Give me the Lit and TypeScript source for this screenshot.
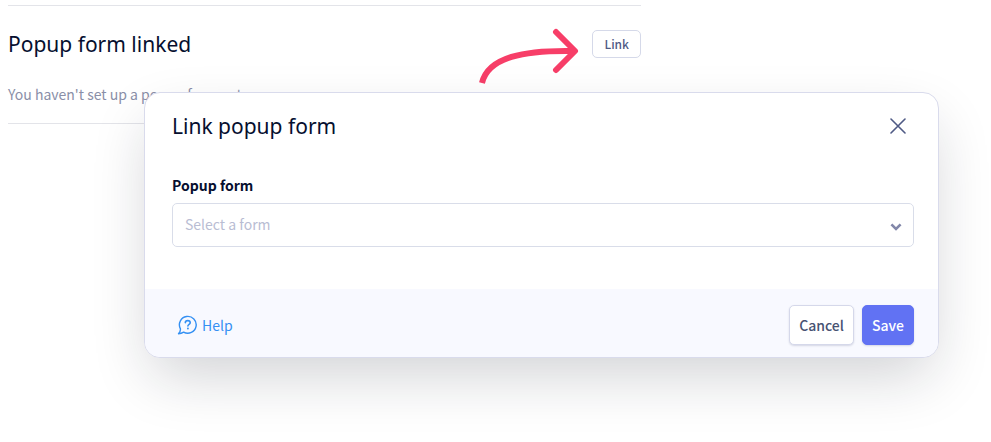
import { LitElement, html, css } from "lit";
import { customElement } from "lit/decorators.js";

@customElement("link-form-dialog")
class LinkFormDialog extends LitElement {
  static styles = css`
    :host {
      display: block;
      box-sizing: border-box;
      border: 1px solid #d9dbec;
      border-radius: 16px;
      background: #fff;
      overflow: hidden;
      box-shadow: 0 24px 60px -8px rgba(20, 24, 40, 0.2);
    }
    .head {
      display: flex;
      align-items: center;
      justify-content: space-between;
      padding: 17px 24px 0 27px;
    }
    .title {
      margin: 0;
      font: 400 21px/32px "Noto Sans", sans-serif;
      color: #060f2f;
    }
    .close {
      display: flex;
      padding: 8px;
      border: 0;
      background: none;
      color: #4f5a85;
    }
    .field {
      padding: 33px 24px 42px 27px;
    }
    .label {
      display: block;
      line-height: 20px;
      font-weight: 700;
      color: #060f2f;
      margin-bottom: 8px;
    }
    .control {
      position: relative;
    }
    .select {
      appearance: none;
      display: block;
      box-sizing: border-box;
      width: 100%;
      height: 44px;
      padding: 0 40px 2px 12px;
      border: 1px solid #d9dde9;
      border-radius: 5px;
      background: #fff;
      font: inherit;
      color: #b9bdd3;
    }
    .chevron {
      position: absolute;
      right: 12px;
      top: 20px;
      color: #8388aa;
      pointer-events: none;
    }
    .foot {
      display: flex;
      align-items: center;
      gap: 8px;
      padding: 16px 24px 12px 32px;
      background: #f8f9ff;
    }
    .help {
      display: flex;
      align-items: center;
      gap: 4px;
      margin-right: auto;
      color: #3490f3;
      text-decoration: none;
    }
    .btn {
      height: 40px;
      padding: 0 9px 1px;
      border: 1px solid #d5d8ea;
      border-radius: 5px;
      background: #fff;
      font: inherit;
      font-weight: 500;
      color: #475272;
      box-shadow: 0 1px 2px rgba(30, 40, 90, 0.16);
    }
    .primary {
      border-color: #6172f3;
      background: #6172f3;
      color: #fff;
    }
  `;

  render() {
    return html`
      <header class="head">
        <h2 class="title">Link popup form</h2>
        <button class="close" type="button" aria-label="Close">
          <svg width="16" height="16" viewBox="0 0 16 16" fill="none" stroke="currentColor" stroke-width="1.6" stroke-linecap="round">
            <path d="M1 1L15 15M15 1L1 15" />
          </svg>
        </button>
      </header>
      <div class="field">
        <label class="label" for="form">Popup form</label>
        <div class="control">
          <select class="select" id="form">
            <option>Select a form</option>
          </select>
          <svg class="chevron" width="12" height="9" viewBox="0 0 12 9" fill="none" stroke="currentColor" stroke-width="2.6">
            <path d="M1.4 1.4L6 6L10.6 1.4" />
          </svg>
        </div>
      </div>
      <footer class="foot">
        <a class="help" href="#help">
          <svg width="21" height="20" viewBox="0 0 21 20" fill="none" stroke="currentColor" stroke-width="1.4" stroke-linecap="round" stroke-linejoin="round">
            <path d="M3.4 13.8A8.4 8.4 0 1 1 6.6 17.1C5.2 18 3.3 18.6 1.5 18.7C2.8 17.3 3.6 15.6 3.4 13.8Z" />
            <path d="M8.3 7.6C8.4 6.3 9.2 5.6 10.7 5.6C12.2 5.6 13.2 6.4 13.2 7.7C13.2 9.3 10.9 9.3 10.9 11" stroke-width="1.6" />
            <path d="M10.9 13.4V13.5" stroke-width="1.9" />
          </svg>
          Help
        </a>
        <button class="btn" type="button">Cancel</button>
        <button class="btn primary" type="button">Save</button>
      </footer>
    `;
  }
}

@customElement("app-root")
class AppRoot extends LitElement {
  static styles = css`
    :host {
      display: block;
      position: relative;
      min-height: 100vh;
      overflow: hidden;
      box-sizing: border-box;
      padding: 5px 350px 0 8px;
      background: #fff;
      font: 400 14px/24px "Noto Sans CJK SC", sans-serif;
    }
    .section {
      border-top: 1px solid #e3e4e9;
      border-bottom: 1px solid #e3e4e9;
      padding: 22px 0 17px;
    }
    .row {
      display: flex;
      align-items: center;
      justify-content: space-between;
    }
    .title {
      margin: 0;
      font: 400 21px/32px "Noto Sans", sans-serif;
      color: #060f2f;
    }
    .action {
      position: relative;
    }
    .link {
      display: block;
      height: 28px;
      padding: 0 11px;
      border: 1px solid #d5d9e9;
      border-radius: 5px;
      background: #fff;
      font: inherit;
      font-size: 12px;
      font-weight: 500;
      color: #4f5a85;
    }
    .arrow {
      position: absolute;
      right: calc(100% + 13px);
      top: -2px;
    }
    .note {
      margin: 22px 0 0;
      color: #8a8fa8;
    }
    .dialog {
      position: absolute;
      left: 144px;
      right: 52px;
      top: 92px;
    }
  `;

  render() {
    return html`
      <section class="section">
        <div class="row">
          <h1 class="title">Popup form linked</h1>
          <div class="action">
            <svg class="arrow" width="100" height="58" viewBox="0 0 100 58" fill="none" stroke="#f73e68" stroke-width="6">
              <path d="M3 55C9 29 45 22 95 23" />
              <path d="M77 4L96 23L77 42" stroke-linecap="round" stroke-linejoin="round" />
            </svg>
            <button class="link" type="button">Link</button>
          </div>
        </div>
        <p class="note">You haven't set up a popup form yet.</p>
      </section>
      <link-form-dialog class="dialog" role="dialog" aria-label="Link popup form"></link-form-dialog>
    `;
  }
}
